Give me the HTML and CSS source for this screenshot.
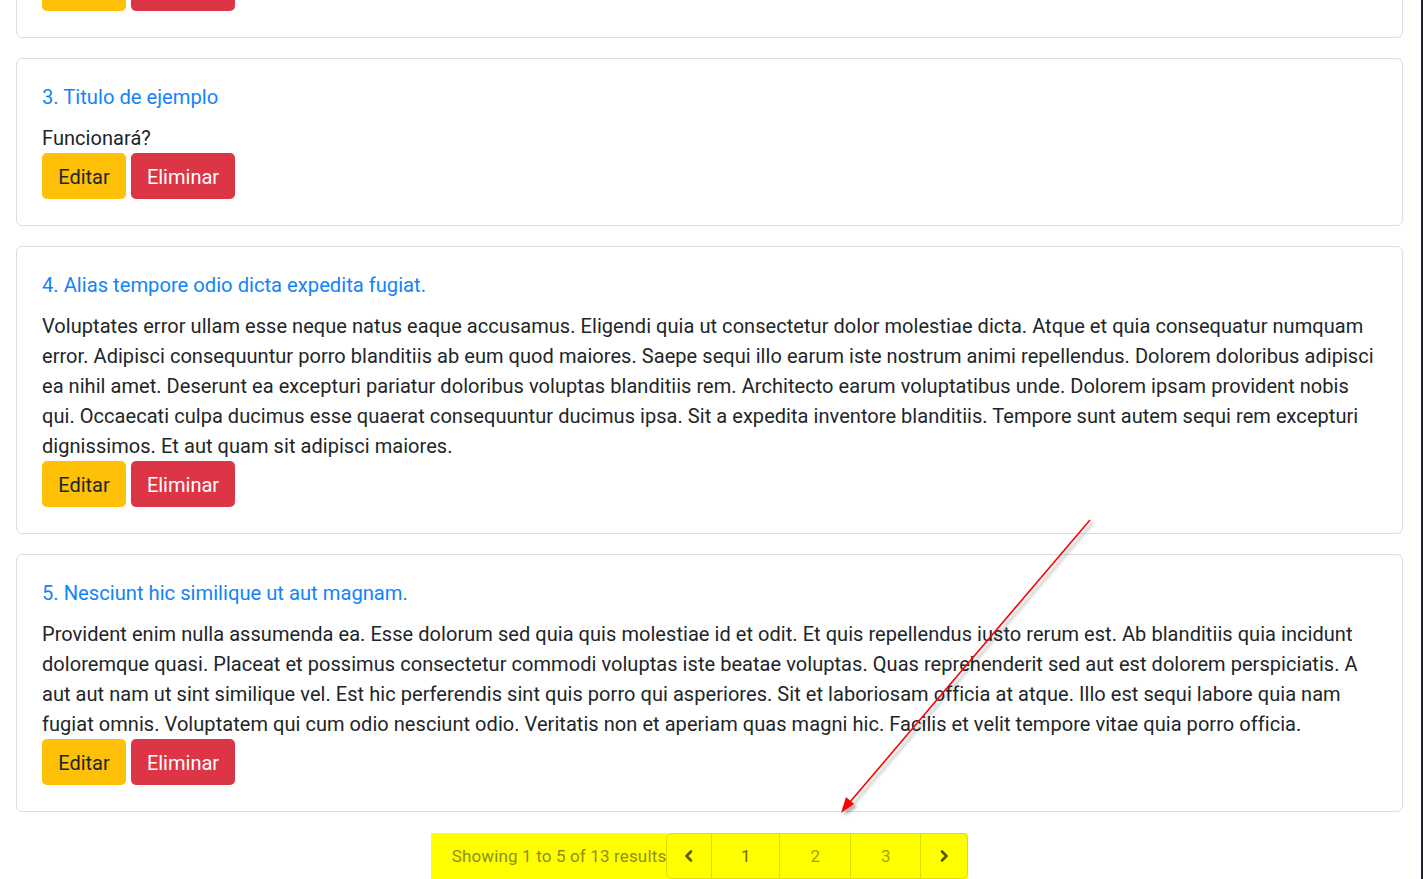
FILE: index.html
```html
<!DOCTYPE html>
<html lang="es">
<head>
<meta charset="utf-8">
<title>Posts</title>
<link rel="stylesheet" href="styles.css">
</head>
<body>
<main class="main">
  <div class="card card-cut">
    <div class="actions">
      <a class="btn btn-warning">Editar</a>
      <a class="btn btn-danger">Eliminar</a>
    </div>
  </div>

  <div class="card">
    <h5 class="card-title">3. Titulo de ejemplo</h5>
    <p class="card-text">Funcionará?</p>
    <div class="actions">
      <a class="btn btn-warning">Editar</a>
      <a class="btn btn-danger">Eliminar</a>
    </div>
  </div>

  <div class="card">
    <h5 class="card-title">4. Alias tempore odio dicta expedita fugiat.</h5>
    <p class="card-text">Voluptates error ullam esse neque natus eaque accusamus. Eligendi quia ut consectetur dolor molestiae dicta. Atque et quia consequatur numquam error. Adipisci consequuntur porro blanditiis ab eum quod maiores. Saepe sequi illo earum iste nostrum animi repellendus. Dolorem doloribus adipisci ea nihil amet. Deserunt ea excepturi pariatur doloribus voluptas blanditiis rem. Architecto earum voluptatibus unde. Dolorem ipsam provident nobis qui. Occaecati culpa ducimus esse quaerat consequuntur ducimus ipsa. Sit a expedita inventore blanditiis. Tempore sunt autem sequi rem excepturi dignissimos. Et aut quam sit adipisci maiores.</p>
    <div class="actions">
      <a class="btn btn-warning">Editar</a>
      <a class="btn btn-danger">Eliminar</a>
    </div>
  </div>

  <div class="card">
    <h5 class="card-title">5. Nesciunt hic similique ut aut magnam.</h5>
    <p class="card-text">Provident enim nulla assumenda ea. Esse dolorum sed quia quis molestiae id et odit. Et quis repellendus iusto rerum est. Ab blanditiis quia incidunt doloremque quasi. Placeat et possimus consectetur commodi voluptas iste beatae voluptas. Quas reprehenderit sed aut est dolorem perspiciatis. A aut aut nam ut sint similique vel. Est hic perferendis sint quis porro qui asperiores. Sit et laboriosam officia at atque. Illo est sequi labore quia nam fugiat omnis. Voluptatem qui cum odio nesciunt odio. Veritatis non et aperiam quas magni hic. Facilis et velit tempore vitae quia porro officia.</p>
    <div class="actions">
      <a class="btn btn-warning">Editar</a>
      <a class="btn btn-danger">Eliminar</a>
    </div>
  </div>

  <nav class="pager-row">
    <div class="pager">
      <p class="pager-info">Showing 1 to 5 of 13 results</p>
      <div class="pages">
        <span class="page page-arrow"><svg width="12" height="14" viewBox="0 0 12 14"><path d="M8 2.5 3.5 7 8 11.5" fill="none" stroke="currentColor" stroke-width="2.6" stroke-linecap="round" stroke-linejoin="round"/></svg></span>
        <span class="page page-current">1</span>
        <span class="page page-num">2</span>
        <span class="page page-num page-3">3</span>
        <span class="page page-arrow page-next"><svg width="12" height="14" viewBox="0 0 12 14"><path d="M4 2.5 8.5 7 4 11.5" fill="none" stroke="currentColor" stroke-width="2.6" stroke-linecap="round" stroke-linejoin="round"/></svg></span>
      </div>
    </div>
  </nav>
</main>

<svg class="annotation" width="1423" height="879" viewBox="0 0 1423 879">
  <defs>
    <filter id="shadow" x="-20%" y="-20%" width="140%" height="140%">
      <feDropShadow dx="3" dy="3" stdDeviation="1.5" flood-color="#000" flood-opacity="0.3"/>
    </filter>
  </defs>
  <g filter="url(#shadow)">
    <line x1="1090" y1="520" x2="850" y2="802" stroke="#ff0000" stroke-width="1.6"/>
    <polygon points="841,813 846,797 854,804" fill="#ff0000"/>
  </g>
</svg>
</body>
</html>
```
FILE: styles.css
```css
html {
  background: #1c2430;
}
body {
  margin: 0 2px 0 0;
  background: #ffffff;
  min-height: 100vh;
  font-family: Roboto, "Liberation Sans", Arial, sans-serif;
  color: #212529;
  overflow: hidden;
}
.main {
  padding: 0 18px 0 16px;
  display: flex;
  flex-direction: column;
  gap: 20px;
}
.card {
  border: 1px solid #dedede;
  border-radius: 6px;
  padding: 25px 24px 26px 25px;
  background: #fff;
}
.card-cut {
  margin-top: -61px;
}
.card-title {
  margin: 0 0 13px;
  font-size: 20.2px;
  line-height: 26px;
  font-weight: 400;
  color: #1384f8;
}
.card-text {
  margin: 0;
  font-size: 20px;
  line-height: 30px;
  letter-spacing: 0.05px;
}
.actions {
  display: flex;
  gap: 5px;
}
.btn {
  display: inline-flex;
  align-items: center;
  justify-content: center;
  height: 46px;
  padding: 1px 15px 0;
  border-radius: 5px;
  font-size: 20px;
  line-height: 1;
  text-decoration: none;
  box-sizing: border-box;
}
.btn-warning {
  background: #ffc107;
  color: #212529;
  min-width: 84px;
}
.btn-danger {
  background: #dc3545;
  color: #ffffff;
  min-width: 104px;
}
.pager-row {
  display: flex;
  justify-content: center;
  padding-top: 1px;
}
.pager {
  display: flex;
  align-items: stretch;
  background: #ffff00;
  margin-right: 20px;
  padding-left: 21px;
  height: 46px;
}
.pager-info {
  margin: 0;
  display: flex;
  align-items: center;
  font-size: 17px;
  letter-spacing: 0.15px;
  color: #8d8d22;
}
.pages {
  display: flex;
  border: 1px solid #dede00;
  border-radius: 6px;
  box-sizing: border-box;
}
.page {
  display: flex;
  align-items: center;
  justify-content: center;
  font-size: 17px;
  border-left: 1px solid #dede00;
}
.page:first-child {
  border-left: 0;
}
.page-arrow {
  width: 44px;
  color: #585800;
}
.page-next {
  width: 46px;
}
.page-current {
  width: 67px;
  color: #6a6a00;
}
.page-num {
  width: 70px;
  color: #a4a400;
}
.page-3 {
  width: 69px;
}
.annotation {
  position: absolute;
  top: 0;
  left: 0;
  pointer-events: none;
}
```
